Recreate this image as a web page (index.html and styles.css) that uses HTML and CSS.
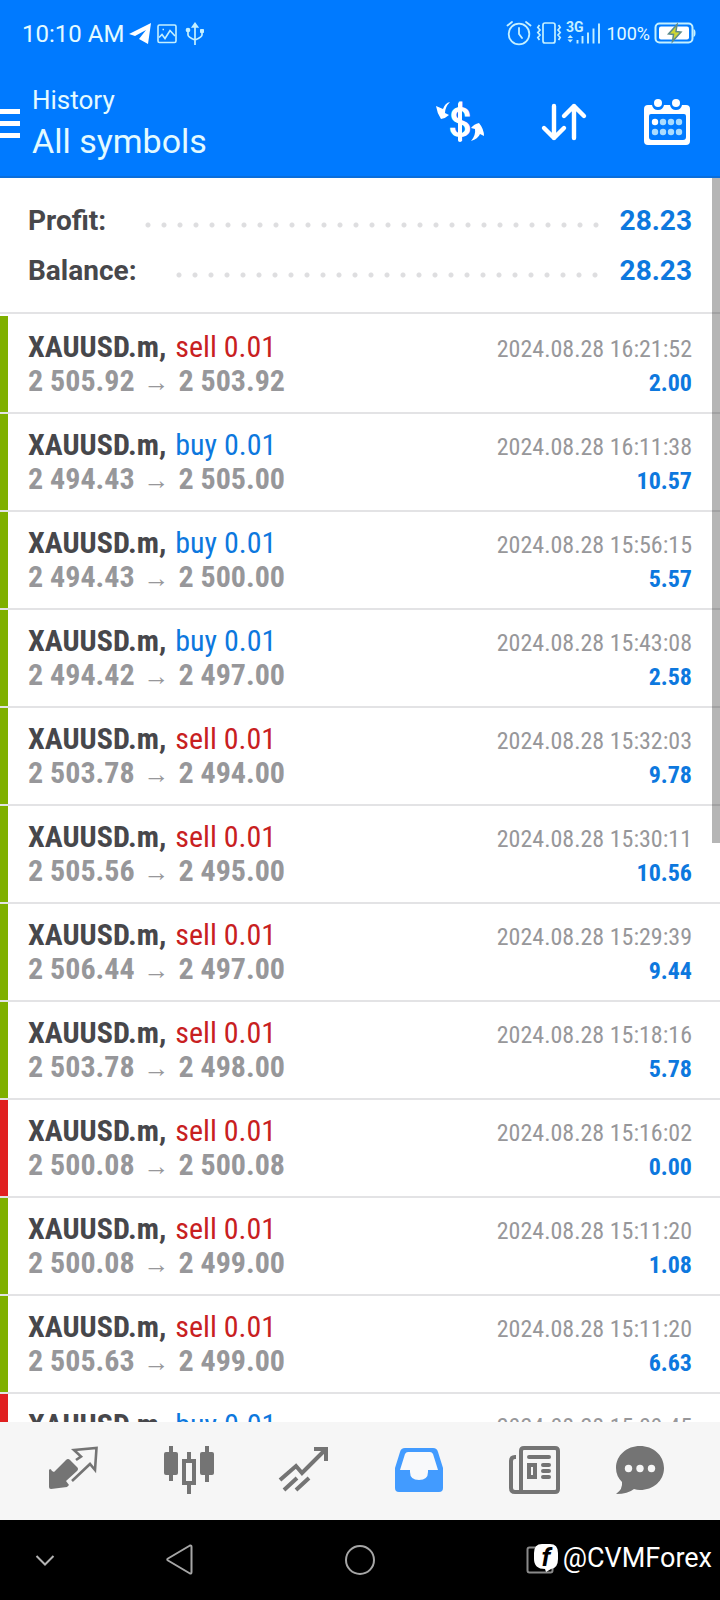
FILE: index.html
```html
<!DOCTYPE html>
<html lang="en">
<head>
<meta charset="utf-8">
<meta name="viewport" content="width=device-width, initial-scale=1">
<title>History</title>
<link rel="stylesheet" href="styles.css">
</head>
<body class="screen">
<header class="header">
  <div class="status">
    <div class="status-left">
      <span class="clock">10:10 AM</span>
      <svg width="24" height="24" viewBox="0 0 24 24" fill="#fff"><path d="M1 12 23 1 20 22 11 17 18 8 7 14Z"/></svg>
      <svg class="gap-small" width="20" height="22" viewBox="0 0 20 22" fill="none" stroke="#c4f0ff" stroke-width="1.6"><rect x="1" y="2" width="18" height="17.500" rx="1.500"/><path d="M2 14.500 5 11.500 8 15.500 13 7.500 18 13"/><path d="M5.500 6.500h1.500"/></svg>
      <svg class="gap-large" width="20" height="24" viewBox="0 0 20 24" fill="none" stroke="#c4f0ff" stroke-width="1.700"><path d="M10 23V3M3 9v4q0 2 7 5M17 10v3q0 2-7 5"/><path d="M7.500 5 10 1.500 12.500 5Z" fill="#c4f0ff"/><circle cx="3" cy="8" r="1.500" fill="#c4f0ff"/><path d="M15.500 7.500h3v3h-3z" fill="#c4f0ff" stroke-width="1"/></svg>
    </div>
    <div class="status-right">
      <svg width="26" height="26" viewBox="0 0 26 26" fill="none" stroke="#c4f0ff" stroke-width="1.800" stroke-linecap="round"><circle cx="13" cy="13" r="10.300"/><path d="M13 7v6l3 4M1.500 4.500 6 1M20 1l4.500 3.500"/></svg>
      <svg width="26" height="26" viewBox="0 0 26 26" fill="none" stroke="#c4f0ff" stroke-width="1.700"><rect x="7" y="2" width="12" height="20" rx="2"/><path d="M3.500 4 1.800 6.500 4 9 1.800 11.500 4 14 1.800 16.500 3.500 19M22.500 4l1.700 2.500L22 9l2.200 2.500L22 14l2.200 2.500L22.500 19"/></svg>
      <svg width="36" height="26" viewBox="0 0 36 26"><text class="network" x="0" y="11">3G</text><path d="M11.500 22.500V19M16.500 22.500V15M22 22.500v-11M27.500 22.500v-15M33 22.500v-20" stroke="#c4f0ff" stroke-width="1.900"/><path d="m1.500 17 2.700-3L7 17ZM1.500 18.500l2.700 3L7 18.500Z" fill="#c4f0ff"/></svg>
      <span class="percent">100%</span>
      <svg width="42" height="24" viewBox="0 0 42 24"><rect x="1.500" y="1.500" width="37" height="19" rx="4" fill="none" stroke="#c4f0ff" stroke-width="2"/><path d="M39.500 7q2 .5 2 4t-2 4Z" fill="#c4f0ff"/><rect x="5" y="4.500" width="30" height="13" rx="2" fill="#fff"/><path d="M23 2.500 14.500 12l5 .5-1 7 8.500-9.500-5-.5Z" fill="#cfd633" stroke="#5d8b8b" stroke-width="1.500"/></svg>
    </div>
  </div>
  <div class="appbar">
    <button class="menu" aria-label="Menu"><svg width="20" height="30" viewBox="0 0 20 30" fill="#fff"><path d="M0 0h20v5H0zM0 12h20v5H0zM0 24h20v5H0z"/></svg></button>
    <div class="titles">
      <p class="subtitle">History</p>
      <h1 class="title">All symbols</h1>
    </div>
    <div class="actions">
      <button class="action" aria-label="Currency"><svg width="48" height="48" viewBox="0 0 48 48"><text class="dollar" x="24" y="39">$</text><path d="M24 6v36" stroke="#fff" stroke-width="4" stroke-linecap="round"/><path d="M14 4Q9 5 7 11L0 8q1 7 5 13 5-1 8-4l-4-2Q9 9 14 4ZM35 43q7-2 9-7l4 2q0-7-5-13-5 1-8 5l4 1q1 6-4 12Z" fill="#fff"/></svg></button>
      <button class="action" aria-label="Sort"><svg width="48" height="48" viewBox="0 0 48 48" fill="none" stroke="#fff" stroke-width="4.400" stroke-linecap="round" stroke-linejoin="round"><path d="M14 8v32M4 30l10 10 10-10M34 40V8M24 18 34 8l10 10"/></svg></button>
      <button class="action" aria-label="Calendar"><svg width="48" height="48" viewBox="0 0 48 48"><path fill="#fff" fill-rule="evenodd" d="M4 7h4q1 5 6 5t6-5h6q1 5 6 5t6-5h4q4 0 4 4v32q0 4-4 4H4q-4 0-4-4V11q0-4 4-4ZM7 16q-2 0-2 2v21q0 3 3 3h31q3 0 3-3V18q0-2-2-2Z"/><circle cx="14" cy="5" r="4" fill="#fff"/><circle cx="32" cy="5" r="4" fill="#fff"/><g fill="#a9dcff"><circle cx="11" cy="24" r="3.200" fill="#fff"/><circle cx="19" cy="24" r="3.200"/><circle cx="27" cy="24" r="3.200"/><circle cx="35" cy="24" r="3.200"/><circle cx="11" cy="34" r="3.200"/><circle cx="19" cy="34" r="3.200"/><circle cx="27" cy="34" r="3.200"/><circle cx="35" cy="34" r="3.200"/></g></svg></button>
    </div>
  </div>
</header>

<main class="content">
  <section class="summary">
    <div class="summary-row"><span class="label">Profit:</span><span class="leader"></span><span class="total">28.23</span></div>
    <div class="summary-row"><span class="label">Balance:</span><span class="leader"></span><span class="total">28.23</span></div>
  </section>
  <ul class="deals">
    <li class="deal"><div class="line"><span><b class="symbol">XAUUSD.m,</b> <span class="side sell">sell 0.01</span></span><time class="time">2024.08.28 16:21:52</time></div><div class="line"><span class="prices">2 505.92 <span class="arrow">→</span> 2 503.92</span><span class="profit">2.00</span></div></li>
    <li class="deal"><div class="line"><span><b class="symbol">XAUUSD.m,</b> <span class="side buy">buy 0.01</span></span><time class="time">2024.08.28 16:11:38</time></div><div class="line"><span class="prices">2 494.43 <span class="arrow">→</span> 2 505.00</span><span class="profit">10.57</span></div></li>
    <li class="deal"><div class="line"><span><b class="symbol">XAUUSD.m,</b> <span class="side buy">buy 0.01</span></span><time class="time">2024.08.28 15:56:15</time></div><div class="line"><span class="prices">2 494.43 <span class="arrow">→</span> 2 500.00</span><span class="profit">5.57</span></div></li>
    <li class="deal"><div class="line"><span><b class="symbol">XAUUSD.m,</b> <span class="side buy">buy 0.01</span></span><time class="time">2024.08.28 15:43:08</time></div><div class="line"><span class="prices">2 494.42 <span class="arrow">→</span> 2 497.00</span><span class="profit">2.58</span></div></li>
    <li class="deal"><div class="line"><span><b class="symbol">XAUUSD.m,</b> <span class="side sell">sell 0.01</span></span><time class="time">2024.08.28 15:32:03</time></div><div class="line"><span class="prices">2 503.78 <span class="arrow">→</span> 2 494.00</span><span class="profit">9.78</span></div></li>
    <li class="deal"><div class="line"><span><b class="symbol">XAUUSD.m,</b> <span class="side sell">sell 0.01</span></span><time class="time">2024.08.28 15:30:11</time></div><div class="line"><span class="prices">2 505.56 <span class="arrow">→</span> 2 495.00</span><span class="profit">10.56</span></div></li>
    <li class="deal"><div class="line"><span><b class="symbol">XAUUSD.m,</b> <span class="side sell">sell 0.01</span></span><time class="time">2024.08.28 15:29:39</time></div><div class="line"><span class="prices">2 506.44 <span class="arrow">→</span> 2 497.00</span><span class="profit">9.44</span></div></li>
    <li class="deal"><div class="line"><span><b class="symbol">XAUUSD.m,</b> <span class="side sell">sell 0.01</span></span><time class="time">2024.08.28 15:18:16</time></div><div class="line"><span class="prices">2 503.78 <span class="arrow">→</span> 2 498.00</span><span class="profit">5.78</span></div></li>
    <li class="deal deal-loss"><div class="line"><span><b class="symbol">XAUUSD.m,</b> <span class="side sell">sell 0.01</span></span><time class="time">2024.08.28 15:16:02</time></div><div class="line"><span class="prices">2 500.08 <span class="arrow">→</span> 2 500.08</span><span class="profit">0.00</span></div></li>
    <li class="deal"><div class="line"><span><b class="symbol">XAUUSD.m,</b> <span class="side sell">sell 0.01</span></span><time class="time">2024.08.28 15:11:20</time></div><div class="line"><span class="prices">2 500.08 <span class="arrow">→</span> 2 499.00</span><span class="profit">1.08</span></div></li>
    <li class="deal"><div class="line"><span><b class="symbol">XAUUSD.m,</b> <span class="side sell">sell 0.01</span></span><time class="time">2024.08.28 15:11:20</time></div><div class="line"><span class="prices">2 505.63 <span class="arrow">→</span> 2 499.00</span><span class="profit">6.63</span></div></li>
    <li class="deal deal-loss"><div class="line"><span><b class="symbol">XAUUSD.m,</b> <span class="side buy">buy 0.01</span></span><time class="time">2024.08.28 15:09:45</time></div></li>
  </ul>
  <div class="scrollbar"></div>
</main>

<nav class="tabs">
  <button class="tab" aria-label="Quotes"><svg width="52" height="52" viewBox="0 0 52 52"><path d="M2 24q1 0 2 2l2 1L18 15q2-2 4 0l7 7q2 2 0 4L18 36l3 4-2 2-16 2q-2 0-2-2V25Z" fill="#747474"/><path d="M24 36 42 19 47 25 48.500 3 26 5 33 11.500 28 15" fill="none" stroke="#747474" stroke-width="2.600"/></svg></button>
  <button class="tab" aria-label="Charts"><svg width="52" height="52" viewBox="0 0 52 52" fill="#747474"><rect x="1" y="7" width="14" height="23" rx="2"/><rect x="37" y="7" width="14" height="23" rx="2"/><path d="M6 1h4v35H6zM42 1h4v36h-4zM24 7h4v8h-4zM24 38h4v11h-4z"/><rect x="21" y="16" width="10" height="22" fill="none" stroke="#747474" stroke-width="4"/></svg></button>
  <button class="tab" aria-label="Trade"><svg width="52" height="52" viewBox="0 0 52 52" fill="none" stroke="#747474" stroke-width="4"><path d="m2 35 16-14 6 7L47 5M36 4h12v12"/><path d="M6 45 19 33M18 45 31 33"/></svg></button>
  <button class="tab" aria-label="History"><svg width="52" height="52" viewBox="0 0 52 52"><path d="M12 3h28q4 0 5 4l5 16v20q0 4-4 4H6q-4 0-4-4V23L7 7q1-4 5-4Z" fill="#429bff"/><path d="M15 7h22q2 0 3 2l5 16H35v2q0 8-9 8t-9-8v-2H7l5-16q1-2 3-2Z" fill="#f8f9fb"/></svg></button>
  <button class="tab" aria-label="News"><svg width="52" height="52" viewBox="0 0 52 52" fill="none" stroke="#747474" stroke-width="4"><path d="M8 12H7q-4 0-4 4v27q0 4 4 4h40q3 0 3-3V6q0-3-3-3H16q-3 0-3 3v41"/><path d="M21 12h20M35 20h6M35 26h6M35 32h6" stroke-linecap="round"/><rect x="21" y="20" width="6" height="12"/></svg></button>
  <button class="tab" aria-label="Messages"><svg width="50" height="52" viewBox="0 0 50 52"><path d="M25 1c13 0 24 9 24 22S38 45 25 45q-3 0-6-1-6 5-18 5 7-5 6-12Q1 31 1 23C1 10 12 1 25 1Z" fill="#747474"/><g fill="#f6f6f6"><circle cx="13.500" cy="23.500" r="3.700"/><circle cx="25" cy="23.500" r="3.700"/><circle cx="36.500" cy="23.500" r="3.700"/></g></svg></button>
</nav>

<footer class="system">
  <button class="key" aria-label="Hide"><svg width="20" height="14" viewBox="0 0 20 14" fill="none" stroke="#b4b4b4" stroke-width="2"><path d="m1.500 3 8.500 8.500L18.500 3"/></svg></button>
  <button class="key" aria-label="Back"><svg width="28" height="32" viewBox="0 0 28 32" fill="none" stroke="#a6a6a6" stroke-width="2" stroke-linejoin="round"><path d="M24 1.500 2 14.500q-1.500 1 0 2L24 29.500q1.500.5 1.500-1.500V3q0-2-1.500-1.500Z"/></svg></button>
  <button class="key" aria-label="Home"><svg width="32" height="32" viewBox="0 0 32 32" fill="none" stroke="#a6a6a6" stroke-width="2"><circle cx="16" cy="16" r="14"/></svg></button>
  <button class="key" aria-label="Recent"><svg width="28" height="28" viewBox="0 0 28 28" fill="none" stroke="#8a8a8a" stroke-width="2"><rect x="1.500" y="1.500" width="25" height="25" rx="2"/></svg></button>
  <div class="watermark">
    <svg width="26" height="30" viewBox="0 0 26 30"><path d="M9 1h8q8 0 8 9v6q0 9-7 10l-5 3-1-3Q1 26 1 16v-6q0-9 8-9Z" fill="#fff"/><text class="badge-letter" x="13" y="23">f</text></svg>
    <span>@CVMForex</span>
  </div>
</footer>
</body>
</html>
```
FILE: styles.css
```css
* { box-sizing: border-box; }

.screen {
  margin: 0;
  height: 100vh;
  display: flex;
  flex-direction: column;
  overflow: hidden;
  background: #fff;
  color: #47474b;
  font-family: Roboto, "Liberation Sans", sans-serif;
}

button {
  margin: 0;
  padding: 0;
  border: 0;
  background: none;
}

svg { display: block; flex: none; }

.header {
  background: #007aff;
  color: #e4faff;
  border-bottom: 2px solid #0a6edb;
}

.status {
  display: flex;
  justify-content: space-between;
  align-items: center;
  height: 68px;
  padding: 0 24px 0 22px;
}

.status-left,
.status-right { display: flex; align-items: center; }
.status-left { gap: 4px; }
.status-right { gap: 4px; }
.gap-small { margin-left: 1px; }
.gap-large { margin-left: 4px; }
.clock { font-size: 24px; line-height: 28px; }
.percent { font-size: 18px; line-height: 24px; }
.network { font: bold 14px Roboto, sans-serif; fill: #c4f0ff; }

.appbar {
  display: flex;
  align-items: center;
  height: 108px;
  padding-right: 28px;
}

.menu { padding-top: 4px; }
.titles { flex: 1; padding: 2px 0 0 12px; }
.subtitle { margin: 0; font-size: 26px; line-height: 36px; }
.title { margin: 0; font-size: 34px; font-weight: 400; line-height: 46px; }
.actions { display: flex; gap: 56px; }
.dollar {
  font: 500 42px Roboto, sans-serif;
  text-anchor: middle;
  fill: #fff;
}

.content {
  position: relative;
  flex: 1;
  min-height: 0;
  overflow: hidden;
}

.summary {
  padding: 17px 28px 17px;
  border-bottom: 2px solid #e3e3e5;
}

.summary-row {
  display: flex;
  align-items: center;
  height: 50px;
  font-size: 28px;
  font-weight: 700;
}

.leader {
  flex: 1;
  height: 6px;
  margin: 10px 20px 0 39px;
  background: radial-gradient(circle at 3px 3px, #dedee0 2px, transparent 3px) 0 0 / 16px 6px;
}
.total { color: #0d78de; }

.deals {
  margin: 0;
  padding: 2px 0 0;
  list-style: none;
  font-family: "Roboto Condensed", "Liberation Sans Narrow", Roboto, sans-serif;
}

.deal {
  height: 98px;
  padding: 14px 28px 0;
  border-bottom: 2px solid #e3e3e5;
  background: linear-gradient(#7fb000, #7fb000) 0 0 / 8px 100% no-repeat;
}
.deal-loss { background-image: linear-gradient(#e02020, #e02020); }

.line {
  display: flex;
  justify-content: space-between;
  align-items: baseline;
  height: 34px;
  font-size: 30px;
  line-height: 34px;
  white-space: nowrap;
}

.symbol { font-weight: 700; }
.side { margin-left: 2px; }
.sell { color: #c8201f; }
.buy { color: #0d78de; }
.prices { color: #97979a; font-weight: 700; }
.arrow {
  margin: 0 2px;
  font-family: "Liberation Sans", sans-serif;
  font-size: 26px;
  font-weight: 400;
}
.time { color: #97979a; font-size: 24px; }
.profit { color: #0d78de; font-size: 24px; font-weight: 700; }

.scrollbar {
  position: absolute;
  top: 0;
  right: 0;
  width: 8px;
  height: 665px;
  background: rgba(0, 0, 0, 0.29);
}

.tabs {
  display: grid;
  grid-template-columns: repeat(5, 115fr) 97fr;
  align-items: center;
  height: 98px;
  padding: 0 32px 0 16px;
  background: #f6f6f6;
}
.tab { display: flex; justify-content: center; }

.system {
  position: relative;
  display: grid;
  grid-template-columns: 1fr 2fr 2fr 2fr 1fr;
  align-items: center;
  height: 80px;
  background: #000;
}
.key { display: flex; justify-content: center; }

.watermark {
  position: absolute;
  top: 22px;
  right: 8px;
  display: flex;
  align-items: center;
  gap: 4px;
  color: #fff;
  font-size: 27px;
  line-height: 32px;
}
.badge-letter {
  font: italic bold 26px Roboto, sans-serif;
  text-anchor: middle;
  fill: #000;
}
```
